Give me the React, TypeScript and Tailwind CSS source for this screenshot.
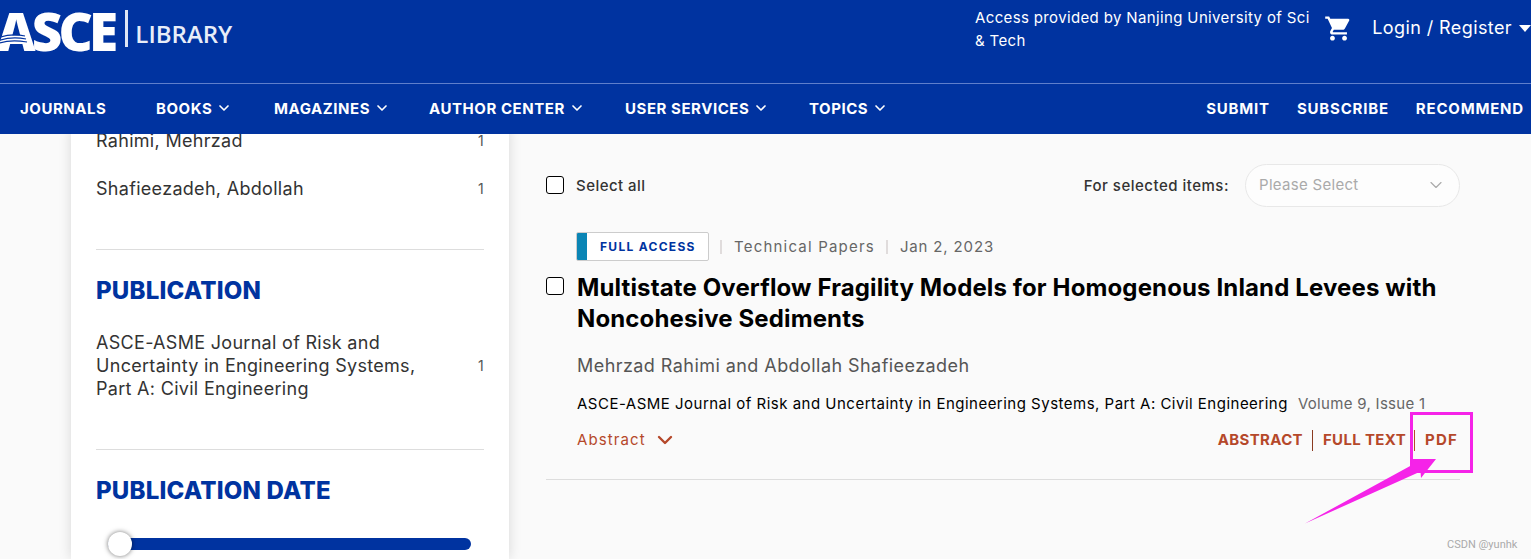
import React from 'react';
import { ChevronDown } from 'lucide-react';
import { MdShoppingCart } from 'react-icons/md';

const navLeft = [
  { label: 'JOURNALS', width: 'w-[136px]', arrow: false },
  { label: 'BOOKS', width: 'w-[118px]', arrow: true },
  { label: 'MAGAZINES', width: 'w-[155px]', arrow: true },
  { label: 'AUTHOR CENTER', width: 'w-[196px]', arrow: true },
  { label: 'USER SERVICES', width: 'w-[184px]', arrow: true },
  { label: 'TOPICS', width: 'w-[90px]', arrow: true },
];

const Header = () => (
  <header className="relative z-10 bg-[#0033a0] text-white shrink-0">
    <div className="h-[83px] flex border-b border-[#5f7fcb] box-content overflow-hidden">
      <div className="flex items-start w-[980px] -ml-[3px] pt-[1px]">
        <span className="relative text-[53px] leading-[60px] font-extrabold tracking-[-3.8px] font-['Open_Sans',sans-serif]">
          ASCE
          <svg className="absolute left-0 top-[28px]" width="34" height="20" viewBox="0 0 34 20" fill="none" stroke="#0033a0" strokeWidth="1.2">
            <path d="M0 9 Q14 4 28 7" />
            <path d="M0 12 Q14 7 29 10" />
            <path d="M0 15 Q12 10 30 13" />
          </svg>
        </span>
        <span className="w-[3px] h-[37px] bg-[#dfe6f5] ml-[11px] mt-[9px]" />
        <span className="text-[24px] leading-[34px] font-semibold ml-[7px] mt-[16px] text-[#e8edf8] font-['Open_Sans',sans-serif]">LIBRARY</span>
      </div>
      <div className="w-[350px] pt-[6px] text-[15px] leading-[23px] tracking-[0.36px]">
        Access provided by Nanjing University of Sci<br />&amp; Tech
      </div>
      <div className="pt-[14px] flex items-start">
        <MdShoppingCart className="w-[29px] h-[29px]" />
      </div>
      <div className="pt-[15px] ml-[19px] flex items-start whitespace-nowrap">
        <span className="text-[18px] leading-[26px] tracking-[0.4px]">Login / Register</span>
        <span className="ml-[7px] mt-[10px] w-0 h-0 border-x-[6px] border-x-transparent border-t-[7px] border-t-white" />
      </div>
    </div>
    <nav className="h-[50px] flex items-center pl-[20px] text-[15px] font-bold tracking-[0.55px] whitespace-nowrap">
      {navLeft.map((item) => (
        <div key={item.label} className={`${item.width} flex items-center`}>
          <span>{item.label}</span>
          {item.arrow && <ChevronDown className="w-[16px] h-[16px] ml-[4px] -mt-[2px]" strokeWidth={2.5} />}
        </div>
      ))}
      <div className="ml-auto flex gap-[27px] pr-[7px] tracking-[0.8px]">
        <span>SUBMIT</span>
        <span>SUBSCRIBE</span>
        <span>RECOMMEND</span>
      </div>
    </nav>
  </header>
);

const FacetRow = ({ children, count }: { children: React.ReactNode; count: number }) => (
  <div className="flex items-center justify-between text-[18px] leading-[23px] tracking-[0.3px] text-[#333333]">
    <div className="w-[340px]">{children}</div>
    <span className="text-[14px] text-[#555555]">{count}</span>
  </div>
);

const Sidebar = () => (
  <aside className="w-[438px] ml-[71px] shrink-0 bg-white shadow-[0_0_12px_rgba(0,0,0,0.14)] px-[25px] -mt-[5px]">
    <FacetRow count={1}>Rahimi, Mehrzad</FacetRow>
    <div className="mt-[25px]"><FacetRow count={1}>Shafieezadeh, Abdollah</FacetRow></div>
    <div className="mt-[49px] border-t border-[#dddddd]" />
    <h2 className="mt-[26px] text-[24px] leading-[30px] font-extrabold tracking-[0.2px] text-[#0033a0]">PUBLICATION</h2>
    <div className="mt-[25px]">
      <FacetRow count={1}>ASCE-ASME Journal of Risk and Uncertainty in Engineering Systems, Part A: Civil Engineering</FacetRow>
    </div>
    <div className="mt-[49px] border-t border-[#dddddd]" />
    <h2 className="mt-[26px] text-[24px] leading-[30px] font-extrabold tracking-[0.2px] text-[#0033a0]">PUBLICATION DATE</h2>
    <div className="relative mt-[32px] ml-[12px] w-[363px] h-[12px] rounded-full bg-[#0033a0]">
      <span className="absolute left-0 -top-[6px] w-[24px] h-[24px] rounded-full bg-white shadow-[0_0_5px_rgba(0,0,0,0.55)]" />
    </div>
  </aside>
);

const Checkbox = () => (
  <span className="block w-[18px] h-[18px] rounded-[3px] border border-black bg-white shrink-0" />
);

const Results = () => (
  <main className="ml-[37px] w-[914px] pt-[30px]">
    <div className="flex items-center h-[42px]">
      <Checkbox />
      <span className="ml-[12px] mt-[2px] text-[15px] font-medium tracking-[0.45px] text-[#333333]">Select all</span>
      <span className="ml-auto mt-[2px] text-[15px] font-medium tracking-[0.5px] text-[#333333]">For selected items:</span>
      <div className="ml-[16px] w-[215px] h-[43px] rounded-full border border-[#e8e8e8] bg-[#fdfdfd] flex items-center justify-between pl-[13px] pr-[13px] text-[15px] tracking-[0.3px] text-[#aaaaaa]">
        <span>Please Select</span>
        <ChevronDown className="w-[20px] h-[20px] text-[#aaaaaa]" strokeWidth={1.4} />
      </div>
    </div>

    <div className="ml-[31px] mt-[26px] flex items-center text-[15px] tracking-[1.2px] text-[#666666] h-[29px]">
      <span className="h-[29px] w-[133px] -ml-px flex items-center rounded-[2px] border border-[#cccccc] bg-white overflow-hidden">
        <span className="w-[10px] h-full bg-[#0a85b5]" />
        <span className="ml-[13px] text-[12px] font-bold tracking-[1.3px] text-[#0033a0]">FULL ACCESS</span>
      </span>
      <span className="ml-[11px] w-[2px] h-[14px] bg-[#e0dcdc]" />
      <span className="ml-[12px] mt-[1px]">Technical Papers</span>
      <span className="ml-[11px] w-[2px] h-[14px] bg-[#e0dcdc]" />
      <span className="ml-[12px] mt-[1px] tracking-[0.85px]">Jan 2, 2023</span>
    </div>

    <div className="flex mt-[11px]">
      <div className="pt-[5px]"><Checkbox /></div>
      <h3 className="ml-[13px] w-[880px] text-[24px] leading-[31px] font-bold tracking-[0.13px] text-black">
        Multistate Overflow Fragility Models for Homogenous Inland Levees with Noncohesive Sediments
      </h3>
    </div>

    <div className="ml-[31px] mt-[20px] text-[18px] leading-[24px] tracking-[0.44px] text-[#555555]">Mehrzad Rahimi and Abdollah Shafieezadeh</div>
    <div className="ml-[31px] mt-[15px] text-[15px] leading-[22px] tracking-[0.49px] whitespace-nowrap">
      <span className="text-black">ASCE-ASME Journal of Risk and Uncertainty in Engineering Systems, Part A: Civil Engineering</span>
      <span className="ml-[10px] tracking-[0.3px] text-[#666666]">Volume 9, Issue 1</span>
    </div>
    <div className="ml-[31px] mt-[14px] flex items-center text-[#b5482a]">
      <span className="text-[15px] tracking-[1.1px]">Abstract</span>
      <ChevronDown className="w-[24px] h-[24px] ml-[7px] -my-[2px]" strokeWidth={2.4} />
      <div className="ml-auto flex items-center text-[15px] font-bold tracking-[0.35px] mr-[2px]">
        <span>ABSTRACT</span>
        <span className="ml-[9px] mr-[10px] w-px h-[21px] bg-[#8a3a20]" />
        <span>FULL TEXT</span>
        <span className="ml-[8px] mr-[10px] w-px h-[21px] bg-[#b5482a]" />
        <span className="tracking-[1.2px]">PDF</span>
      </div>
    </div>
    <div className="mt-[27px] border-t border-[#dddddd]" />
  </main>
);

export default function App() {
  return (
    <div className="relative w-[1531px] h-[559px] overflow-hidden bg-[#fafafa] flex flex-col font-['Inter',sans-serif]">
      <Header />
      <div className="flex flex-1 min-h-0">
        <Sidebar />
        <Results />
      </div>
      {/* annotation drawn on top of the screenshot */}
      <svg className="absolute left-0 top-0 pointer-events-none" width="1531" height="559" fill="none">
        <rect x="1411.5" y="413.5" width="60" height="58" stroke="#f523e8" strokeWidth="3" />
        <path d="M1305 523.5 L1412 465 L1411 459 L1436 459 L1421 478 L1420.5 471.5 Z" fill="#f523e8" />
      </svg>
      <span className="absolute left-[1447px] top-[538px] text-[11px] leading-[14px] text-[#aaaaaa] font-['Roboto',sans-serif]">CSDN @yunhk</span>
    </div>
  );
}
